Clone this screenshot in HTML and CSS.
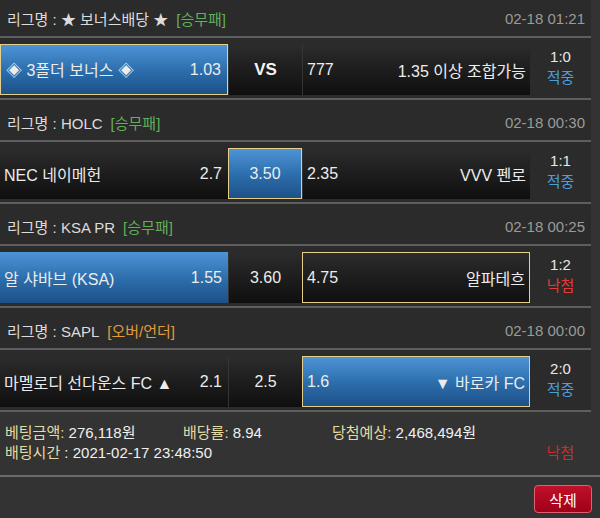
FILE: index.html
```html
<!DOCTYPE html>
<html lang="ko">
<head>
<meta charset="utf-8">
<link rel="stylesheet" href="styles.css">
</head>
<body>
<div class="list">
  <div class="league first"><span class="name">리그명 : ★ 보너스배당 ★</span><span class="type green">[승무패]</span><span class="date">02-18 01:21</span></div>
  <div class="match">
    <div class="cell home blue sel"><span>◈ 3폴더 보너스 ◈</span><span>1.03</span></div>
    <div class="cell draw"><b>VS</b></div>
    <div class="cell away"><span>777</span><span>1.35 이상 조합가능</span></div>
    <div class="result"><span>1:0</span><span class="win">적중</span></div>
  </div>

  <div class="league"><span class="name">리그명 : HOLC</span><span class="type green">[승무패]</span><span class="date">02-18 00:30</span></div>
  <div class="match">
    <div class="cell home"><span>NEC 네이메헌</span><span>2.7</span></div>
    <div class="cell draw blue sel"><span>3.50</span></div>
    <div class="cell away"><span>2.35</span><span>VVV 펜로</span></div>
    <div class="result"><span>1:1</span><span class="win">적중</span></div>
  </div>

  <div class="league"><span class="name">리그명 : KSA PR</span><span class="type green">[승무패]</span><span class="date">02-18 00:25</span></div>
  <div class="match">
    <div class="cell home blue"><span>알 샤바브 (KSA)</span><span>1.55</span></div>
    <div class="cell draw"><span>3.60</span></div>
    <div class="cell away sel"><span>4.75</span><span>알파테흐</span></div>
    <div class="result"><span>1:2</span><span class="lose">낙첨</span></div>
  </div>

  <div class="league"><span class="name">리그명 : SAPL</span><span class="type orange">[오버/언더]</span><span class="date">02-18 00:00</span></div>
  <div class="match">
    <div class="cell home"><span>마멜로디 선다운스 FC ▲</span><span>2.1</span></div>
    <div class="cell draw"><span>2.5</span></div>
    <div class="cell away blue sel"><span>1.6</span><span>▼ 바로카 FC</span></div>
    <div class="result"><span>2:0</span><span class="win">적중</span></div>
  </div>
</div>

<div class="summary">
  <div class="sum-row">
    <span class="item amount"><span class="label">베팅금액:</span> 276,118원</span>
    <span class="item rate"><span class="label">배당률:</span> 8.94</span>
    <span class="item expect"><span class="label">당첨예상:</span> 2,468,494원</span>
  </div>
  <div class="sum-row">
    <span class="item"><span class="label">배팅시간</span> : 2021-02-17 23:48:50</span>
    <span class="status">낙첨</span>
  </div>
</div>
<div class="footer"><button class="del">삭제</button></div>
</body>
</html>
```

FILE: styles.css
```css
* { box-sizing: border-box; }
html, body { margin: 0; padding: 0; }
body {
  background: #333333;
  font-family: "Liberation Sans", "Noto Sans CJK KR", sans-serif;
  color: #e8e8e8;
  width: 600px;
  height: 518px;
  overflow: hidden;
}
.list {
  width: 591px;
  background: #2b2b2b;
}
.league {
  display: flex;
  align-items: center;
  height: 42px;
  padding: 4px 6px 0 7px;
  font-size: 15px;
  color: #dcdcdc;
  border-bottom: 2px solid #5e5e5e;
}
.league.first { height: 38px; padding-top: 0; }
.league .type { margin-left: 8px; }
.green { color: #5fb158; }
.orange { color: #e39b3a; }
.league .date { margin-left: auto; color: #9a9a9a; }
.match {
  display: grid;
  grid-template-columns: 228px 74px 228px 1fr;
  height: 62px;
  padding: 6px 0 3px;
  border-bottom: 2px solid #5e5e5e;
  background: #2b2b2b;
}
.cell {
  display: flex;
  align-items: center;
  justify-content: space-between;
  font-size: 16px;
  color: #ececec;
  background: linear-gradient(#2c2c2c, #0f0f0f);
  border-left: 1px solid #353535;
}
.cell.home { padding: 0 6px 0 4px; border-left: none; }
.cell.away { padding: 0 4px 0 4px; }
.cell.draw { justify-content: center; }
.cell.draw b { font-size: 17px; color: #f4f4f4; }
.cell.blue {
  background: linear-gradient(#4d94d6, #2b6caa 55%, #1d5188);
}
.cell.sel { border: 1px solid #e6cf8a; }
.cell.home.sel { padding-left: 5px; }
.result {
  display: flex;
  flex-direction: column;
  align-items: center;
  justify-content: center;
  font-size: 15px;
  line-height: 21px;
  color: #e8e8e8;
  padding-bottom: 6px;
}
.win { color: #4a9ede; }
.lose { color: #e23b3b; }
.summary {
  padding: 9px 0 0 5px;
  height: 65px;
  font-size: 15px;
  color: #f0f0f0;
  border-bottom: 2px solid #6a6a6a;
}
.sum-row {
  display: flex;
  align-items: center;
  height: 20px;
}
.label { color: #e2dca2; }
.item.amount { width: 178px; }
.item.rate { width: 149px; }
.status { margin-left: auto; margin-right: 26px; color: #d42a2a; }
.footer {
  display: flex;
  justify-content: flex-end;
  padding: 8px 8px 0 0;
}
.del {
  font-family: "Liberation Sans", "Noto Sans CJK KR", sans-serif;
  font-size: 15px;
  color: #ffffff;
  background: linear-gradient(#c0102a, #a00018);
  border: 1px solid #e06070;
  border-radius: 4px;
  width: 58px;
  height: 28px;
  padding: 0;
}
```
